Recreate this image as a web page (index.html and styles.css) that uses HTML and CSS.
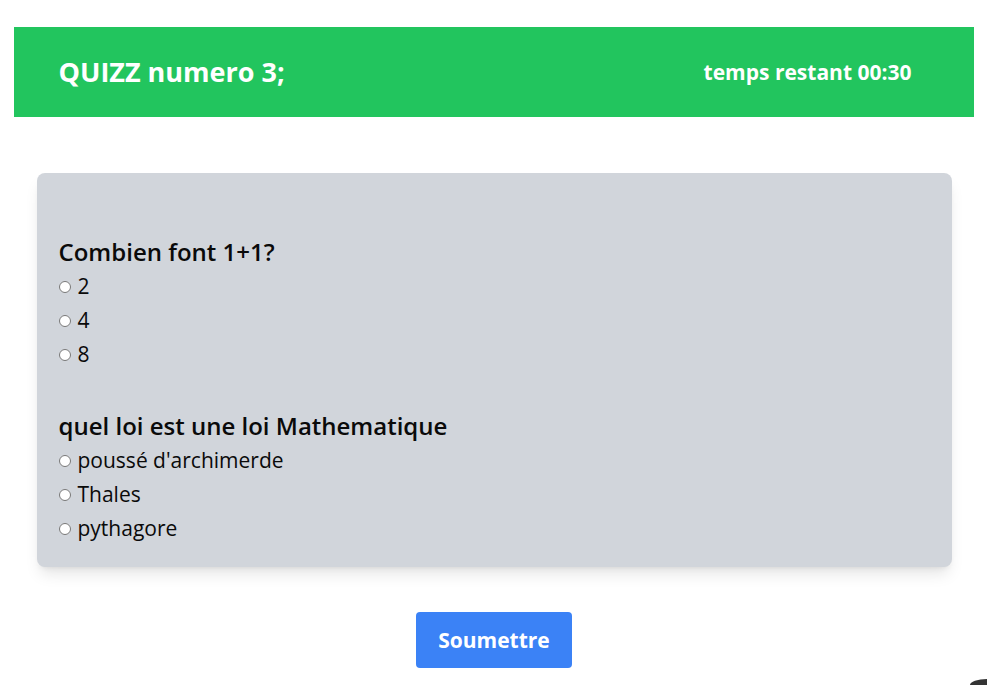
FILE: index.html
```html
<!DOCTYPE html>
<html lang="fr">
<head>
<meta charset="utf-8">
<title>Quizz</title>
<link rel="stylesheet" href="styles.css">
</head>
<body>
<div class="page">
  <header class="topbar">
    <h1 class="title">QUIZZ numero 3;</h1>
    <div class="timer">temps restant 00:30</div>
  </header>
  <main class="content">
    <form class="card">
      <div class="question">
        <h2 class="q-title">Combien font 1+1?</h2>
        <label class="option"><input type="radio" name="q1"><span>2</span></label>
        <label class="option"><input type="radio" name="q1"><span>4</span></label>
        <label class="option"><input type="radio" name="q1"><span>8</span></label>
      </div>
      <div class="question">
        <h2 class="q-title">quel loi est une loi Mathematique</h2>
        <label class="option"><input type="radio" name="q2"><span>poussé d'archimerde</span></label>
        <label class="option"><input type="radio" name="q2"><span>Thales</span></label>
        <label class="option"><input type="radio" name="q2"><span>pythagore</span></label>
      </div>
    </form>
    <div class="actions">
      <button class="submit" type="button">Soumettre</button>
    </div>
  </main>
</div>
<div class="corner-widget"></div>
</body>
</html>
```

FILE: styles.css
```css
* { box-sizing: border-box; }
html, body { margin: 0; padding: 0; background: #ffffff; overflow: hidden; }
body {
  font-family: "Open Sans", "Noto Sans", "DejaVu Sans", sans-serif;
  color: #111111;
  height: 685px;
  position: relative;
}
.page {
  width: 960px;
  margin: 27px auto 0;
}
.topbar {
  height: 90px;
  background: #22c55e;
  display: flex;
  align-items: center;
  justify-content: space-between;
  padding: 0 62px 0 45px;
  color: #ffffff;
}
.title {
  margin: 0;
  font-size: 27px;
  font-weight: 700;
  line-height: 34px;
}
.timer {
  font-size: 21px;
  font-weight: 700;
  line-height: 28px;
}
.content {
  padding: 56px 22px 0 23px;
}
.card {
  background: #d1d5db;
  border-radius: 8px;
  box-shadow: 0 10px 15px -3px rgba(0,0,0,0.1), 0 4px 6px -4px rgba(0,0,0,0.1);
  padding: 24px 22px 22px;
}
.question {
  margin-top: 38px;
  display: flex;
  flex-direction: column;
}
.q-title {
  margin: 0;
  font-size: 24px;
  font-weight: 600;
  line-height: 34px;
  color: #0a0a0a;
}
.option {
  display: flex;
  align-items: center;
  height: 34px;
  font-size: 21px;
  color: #0a0a0a;
}
.option input {
  margin: 1px 7px 0 0;
  width: 12px;
  height: 12px;
}
.actions {
  display: flex;
  justify-content: center;
  margin-top: 45px;
}
.submit {
  width: 156px;
  height: 56px;
  background: #3b82f6;
  color: #ffffff;
  border: none;
  border-radius: 4px;
  font-family: inherit;
  font-size: 21px;
  font-weight: 700;
}
.corner-widget {
  position: absolute;
  left: 970px;
  top: 679px;
  width: 17px;
  height: 6px;
  border-top-left-radius: 17px 6px;
  background: #333333;
}
```
